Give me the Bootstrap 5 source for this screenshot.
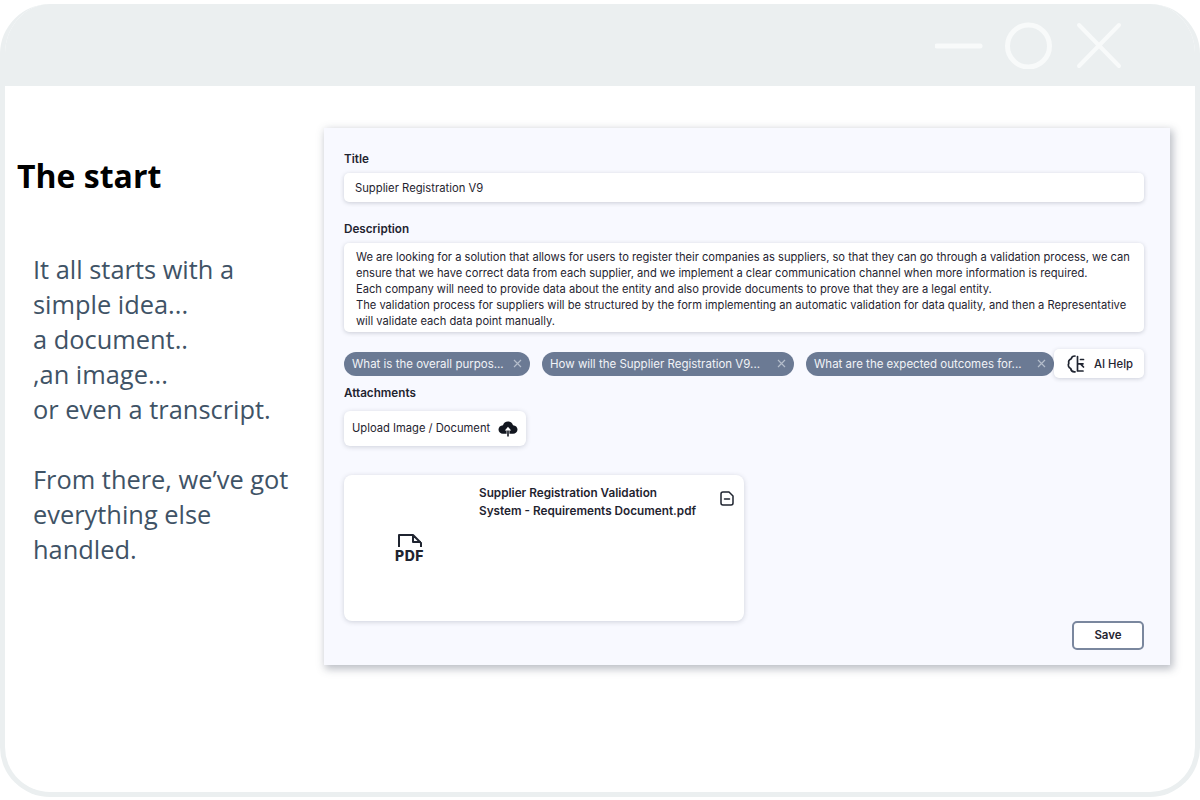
<!DOCTYPE html>
<html lang="en">
<head>
    <meta charset="UTF-8">
    <meta name="viewport" content="width=device-width, initial-scale=1.0">
    <title>The start</title>
    <link href="https://cdn.jsdelivr.net/npm/bootstrap@5.3.0/dist/css/bootstrap.min.css" rel="stylesheet">
    <style>
        body {
            background: #fff;
            height: 800px;
            overflow: hidden;
            padding-top: 4px;
            padding-bottom: 3px;
        }

        .app-window {
            height: 793px;
            border: 5px solid #ebeff0;
            border-top: 0;
            border-radius: 50px;
            overflow: hidden;
        }

        .window-bar {
            height: 82px;
            background: #ebeff0;
            padding-right: 75px;
            padding-top: 15px;
            margin: 0 -5px;
        }

        .intro-col {
            width: 319px;
            flex: none;
            padding-left: 12px;
            padding-top: 70px;
            font-family: "Open Sans", sans-serif;
        }

        .intro-title {
            font-size: 32px;
            font-weight: 700;
            color: #000;
            line-height: 40px;
            margin-bottom: 56px;
        }

        .intro-text {
            font-size: 25.4px;
            line-height: 35px;
            color: #3f5366;
            padding-left: 16px;
            margin-bottom: 35px;
        }

        .form-panel {
            width: 846px;
            height: 537px;
            margin-top: 42px;
            background: #f8f9ff;
            padding: 24px 26px 15px 20px;
            font-family: Inter, sans-serif;
            color: #1f2430;
            box-shadow: 2px 3px 8px 1px rgba(60, 70, 90, .35);
        }

        .field-label {
            font-size: 11.7px;
            font-weight: 600;
            line-height: 13px;
            padding-top: 1px;
            margin-bottom: 7px;
            box-sizing: content-box;
        }

        .attach-label {
            margin-bottom: 11px;
        }

        .field-box {
            background: #fff;
            border: 0;
            border-radius: 5px;
            box-shadow: 0 1px 4px rgba(40, 50, 70, .22);
            color: #1f2430;
        }

        .title-box {
            height: 29px;
            font-size: 11.25px;
            line-height: 30px;
            padding: 0 11px;
            margin-bottom: 20px;
        }

        .desc-box {
            height: 89px;
            font-size: 11.15px;
            line-height: 16.1px;
            padding: 6px 12px 0;
            margin-bottom: 17px;
            white-space: nowrap;
        }

        .chip-row {
            height: 29px;
            margin-bottom: 8px;
        }

        .prompt-chip {
            flex: none;
            height: 24px;
            border-radius: 12px;
            background: #6b7a94;
            color: #f1f3f7;
            font-size: 11.5px;
            padding: 0 8px;
        }

        .prompt-chip + .prompt-chip {
            margin-left: 12px;
        }

        .prompt-chip span,
        .ai-btn span {
            margin-top: 2px;
        }

        .ai-btn {
            flex: none;
            width: 90px;
            height: 29px;
            background: #fff;
            border-radius: 5px;
            box-shadow: 0 1px 4px rgba(40, 50, 70, .2);
            font-size: 11.3px;
            font-weight: 500;
            padding-left: 12px;
        }

        .upload-btn {
            width: 182px;
            height: 35px;
            background: #fff;
            border-radius: 6px;
            box-shadow: 0 1px 5px rgba(40, 50, 70, .2);
            font-size: 11.2px;
            padding: 0 8px;
            margin-bottom: 29px;
        }

        .file-card {
            width: 400px;
            height: 146px;
            background: #fff;
            border-radius: 8px;
            box-shadow: 0 1px 5px rgba(40, 50, 70, .2);
        }

        .file-thumb {
            width: 131px;
            flex: none;
            font-size: 14px;
            font-weight: 800;
            letter-spacing: .5px;
            line-height: 14px;
        }

        .pdf-mark {
            margin-top: 1px;
        }

        .file-name {
            font-size: 11.75px;
            font-weight: 600;
            line-height: 17.5px;
            padding-top: 10px;
            padding-left: 4px;
            width: 245px;
        }

        .file-remove {
            padding-top: 10px;
        }

        .save-btn {
            width: 72px;
            height: 29px;
            padding: 1px 0 0;
            background: #fff;
            border: 2px solid #7a879e;
            border-radius: 5px;
            font-size: 11.5px;
            font-weight: 600;
            color: #1f2430;
        }
    </style>
</head>
<body>

    <div class="app-window d-flex flex-column">
        <div class="window-bar d-flex justify-content-end">
            <svg width="190" height="50" viewBox="0 0 190 50" fill="none" stroke="#f8fafa" stroke-width="5" stroke-linecap="round">
                <line x1="2" y1="27" x2="45" y2="27"/>
                <circle cx="93.500" cy="27" r="21"/>
                <g stroke-width="4">
                    <line x1="144" y1="6" x2="184" y2="47"/>
                    <line x1="184" y1="6" x2="144" y2="47"/>
                </g>
            </svg>
        </div>

        <div class="d-flex flex-grow-1">
            <div class="intro-col">
                <div class="intro-title">The start</div>
                <p class="intro-text">It all starts with a<br>simple idea...<br>a document..<br>,an image...<br>or even a transcript.</p>
                <p class="intro-text">From there, we’ve got<br>everything else<br>handled.</p>
            </div>

            <div class="form-panel">
                <div class="field-label">Title</div>
                <div class="field-box title-box">Supplier Registration V9</div>

                <div class="field-label">Description</div>
                <div class="field-box desc-box">We are looking for a solution that allows for users to register their companies as suppliers, so that they can go through a validation process, we can<br>ensure that we have correct data from each supplier, and we implement a clear communication channel when more information is required.<br>Each company will need to provide data about the entity and also provide documents to prove that they are a legal entity.<br>The validation process for suppliers will be structured by the form implementing an automatic validation for data quality, and then a Representative<br>will validate each data point manually.</div>

                <div class="chip-row d-flex align-items-center">
                    <div class="prompt-chip d-flex align-items-center justify-content-between" style="width: 186px">
                        <span>What is the overall purpos...</span>
                        <svg width="9" height="9" viewBox="0 0 9 9" stroke="#b4bdcb" stroke-width="1.2"><path d="M1 1L8 8M8 1L1 8"/></svg>
                    </div>
                    <div class="prompt-chip d-flex align-items-center justify-content-between" style="width: 252px">
                        <span>How will the Supplier Registration V9...</span>
                        <svg width="9" height="9" viewBox="0 0 9 9" stroke="#b4bdcb" stroke-width="1.2"><path d="M1 1L8 8M8 1L1 8"/></svg>
                    </div>
                    <div class="prompt-chip d-flex align-items-center justify-content-between" style="width: 248px">
                        <span>What are the expected outcomes for...</span>
                        <svg width="9" height="9" viewBox="0 0 9 9" stroke="#b4bdcb" stroke-width="1.2"><path d="M1 1L8 8M8 1L1 8"/></svg>
                    </div>
                    <div class="ai-btn d-flex align-items-center gap-2">
                        <svg width="20" height="20" viewBox="0 0 20 20" fill="none" stroke="#1f2430" stroke-width="1.7" stroke-linecap="round" stroke-linejoin="round">
                            <path d="M9 2C6.800 2 5.500 3.200 5.200 4.800 3.300 5.600 2.300 7.500 2.800 9.300 1.700 11.200 2.500 13.700 4.700 14.500 5 16.500 6.800 18 9 17.800"/>
                            <path d="M11.500 2.500V9.800H17M14.500 5.500H17.500M11.500 9.800V17H17M14.500 9.800L17.500 13"/>
                        </svg>
                        <span>AI Help</span>
                    </div>
                </div>

                <div class="field-label attach-label">Attachments</div>
                <div class="upload-btn d-flex align-items-center justify-content-between">
                    <span>Upload Image / Document</span>
                    <svg width="20" height="16" viewBox="0 0 20 16">
                        <path fill="#12161f" d="M10 .5C7.400.5 5.500 2.200 5 4.300 2.400 4.500.5 6.300.5 8.600c0 2.400 2 4.200 4.500 4.200h3.600V9.600H6.800L10 5.800l3.200 3.800h-1.800v3.200h3.600c2.500 0 4.500-1.800 4.500-4.200 0-2.300-1.900-4.100-4.500-4.300C14.500 2.200 12.600.5 10 .5Z"/>
                        <path fill="#12161f" d="M9.200 9.500h1.600v6H9.200z"/>
                    </svg>
                </div>

                <div class="file-card d-flex">
                    <div class="file-thumb d-flex flex-column align-items-center justify-content-center">
                        <svg width="26" height="15" viewBox="0 0 26 15" fill="none" stroke="#1f2430" stroke-width="2" stroke-linejoin="round">
                            <path d="M2 14V2H16L24 10V14M16 2V9H24"/>
                        </svg>
                        <span class="pdf-mark">PDF</span>
                    </div>
                    <div class="file-name">Supplier Registration Validation<br>System - Requirements Document.pdf</div>
                    <div class="file-remove">
                        <svg width="14" height="15" viewBox="0 0 14 15" fill="none" stroke="#1f2430" stroke-width="1.5" stroke-linejoin="round" stroke-linecap="round">
                            <path d="M3 1H9L13 5V12C13 13.200 12.200 14 11 14H3C1.800 14 1 13.200 1 12V3C1 1.800 1.800 1 3 1Z"/>
                            <path d="M4.500 8H9.500"/>
                        </svg>
                    </div>
                </div>

                <div class="d-flex justify-content-end">
                    <button type="button" class="btn save-btn">Save</button>
                </div>
            </div>
        </div>
    </div>

    <script src="https://cdn.jsdelivr.net/npm/bootstrap@5.3.0/dist/js/bootstrap.bundle.min.js"></script>
</body>
</html>
